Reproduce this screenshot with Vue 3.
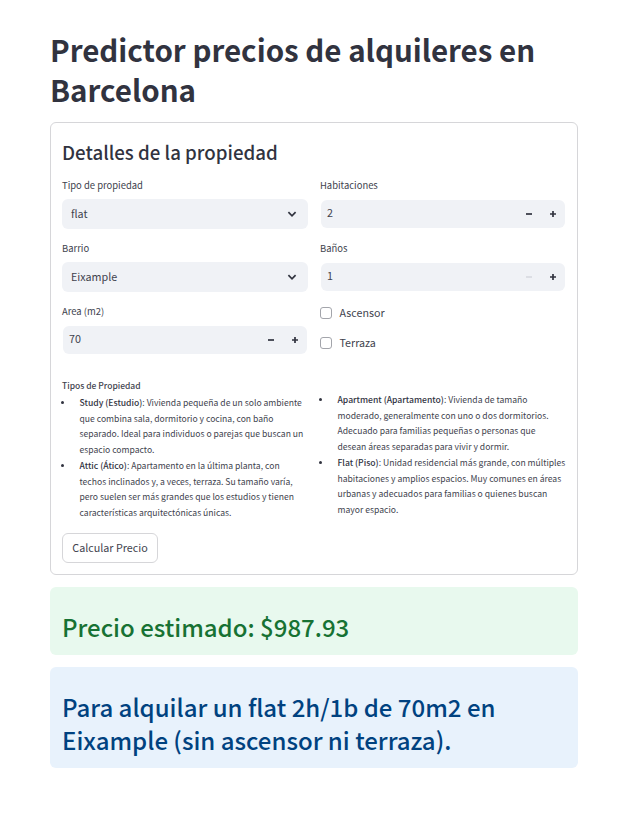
<script setup>
import { ref, computed } from 'vue'

const form = ref({ tipo: 'flat', barrio: 'Eixample', area: 70, habitaciones: 2, banos: 1, ascensor: false, terraza: false })

const left = [
  { kind: 'select', key: 'tipo', label: 'Tipo de propiedad' },
  { kind: 'select', key: 'barrio', label: 'Barrio' },
  { kind: 'number', key: 'area', label: 'Area (m2)', min: 10 },
]
const right = [
  { kind: 'number', key: 'habitaciones', label: 'Habitaciones', min: 1 },
  { kind: 'number', key: 'banos', label: 'Baños', min: 1 },
]
const columns = [left, right]
const checks = [
  { key: 'ascensor', label: 'Ascensor' },
  { key: 'terraza', label: 'Terraza' },
]
const types = [
  [
    { name: 'Study (Estudio)', lines: [': Vivienda pequeña de un solo ambiente', 'que combina sala, dormitorio y cocina, con baño', 'separado. Ideal para individuos o parejas que buscan un', 'espacio compacto.'] },
    { name: 'Attic (Ático)', lines: [': Apartamento en la última planta, con', 'techos inclinados y, a veces, terraza. Su tamaño varía,', 'pero suelen ser más grandes que los estudios y tienen', 'características arquitectónicas únicas.'] },
  ],
  [
    { name: 'Apartment (Apartamento)', lines: [': Vivienda de tamaño', 'moderado, generalmente con uno o dos dormitorios.', 'Adecuado para familias pequeñas o personas que', 'desean áreas separadas para vivir y dormir.'] },
    { name: 'Flat (Piso)', lines: [': Unidad residencial más grande, con múltiples', 'habitaciones y amplios espacios. Muy comunes en áreas', 'urbanas y adecuados para familias o quienes buscan', 'mayor espacio.'] },
  ],
]
const summary = computed(() => [
  `Para alquilar un ${form.value.tipo} ${form.value.habitaciones}h/${form.value.banos}b de ${form.value.area}m2 en`,
  `${form.value.barrio} (sin ascensor ni terraza).`,
])
function step(f, d) {
  form.value[f.key] = Math.max(f.min, form.value[f.key] + d)
}
</script>

<template>
  <main class="page">
    <h1>Predictor precios de alquileres en<br>Barcelona</h1>
    <section class="card">
      <h3>Detalles de la propiedad</h3>
      <div class="grid">
        <div v-for="(col, i) in columns" :key="i" class="col">
          <div v-for="f in col" :key="f.key" class="field">
            <div class="label">{{ f.label }}</div>
            <div v-if="f.kind === 'select'" class="select">
              <span>{{ form[f.key] }}</span>
              <svg width="12" height="12" viewBox="0 0 12 12"><path d="M2.4 4.2 6 7.8l3.6-3.6" /></svg>
            </div>
            <div v-else class="number">
              <span>{{ form[f.key] }}</span>
              <button :disabled="form[f.key] <= f.min" aria-label="−" @click="step(f, -1)">
                <svg width="8" height="8" viewBox="0 0 8 8"><path d="M1 4h6" /></svg>
              </button>
              <button aria-label="+" @click="step(f, 1)">
                <svg width="8" height="8" viewBox="0 0 8 8"><path d="M1 4h6M4 1v6" /></svg>
              </button>
            </div>
          </div>
          <template v-if="i === 1">
            <label v-for="c in checks" :key="c.key" class="check" @click="form[c.key] = !form[c.key]">
              <span class="box"></span><span class="checktext">{{ c.label }}</span>
            </label>
          </template>
        </div>
      </div>
      <div class="grid types">
        <div v-for="(items, i) in types" :key="i" class="typecol">
          <div v-if="i === 0" class="caption">Tipos de Propiedad</div>
          <ul>
            <li v-for="t in items" :key="t.name">
              <i class="dot"></i>
              <div>
                <div v-for="(l, n) in t.lines" :key="n" class="line"><b v-if="n === 0">{{ t.name }}</b>{{ l }}</div>
              </div>
            </li>
          </ul>
        </div>
      </div>
      <button class="submit">Calcular Precio</button>
    </section>
    <div class="alert success">Precio estimado: $987.93</div>
    <div class="alert info"><div v-for="s in summary" :key="s">{{ s }}</div></div>
  </main>
</template>

<style>
body { background: #fff; }
</style>

<style scoped>
.page { box-sizing: border-box; width: 628px; padding: 30px 50px 0; font-family: "Noto Sans CJK SC", "Noto Sans", sans-serif; color: #31333f; white-space: nowrap; }
h1 { margin: 0; height: 92px; font-size: 29.53px; line-height: 40px; font-weight: 700; }
.card { box-sizing: border-box; height: 453px; border: 1px solid #d6d6d9; border-radius: 6px; padding: 12px 11px 11px; }
h3 { margin: 0; height: 43px; line-height: 34px; font-size: 18.7px; font-weight: 500; }
.grid { display: grid; grid-template-columns: 246px 246px; column-gap: 12px; }
.col { height: 177px; display: flex; flex-direction: column; gap: 12px; }
.field { height: 51px; }
.label { height: 21px; line-height: 14px; font-size: 9.45px; color: #41434e; }
.select, .number { display: flex; align-items: center; background: #f0f2f6; border-radius: 6px; font-size: 10.75px; }
.select { height: 30px; padding: 0 10px 0 9px; }
.select span, .number span { flex: 1; color: #41434e; }
.select span { line-height: 28px; }
svg { display: block; fill: none; stroke: currentColor; stroke-width: 1.7; }
.number { height: 28px; margin: 1px; padding-left: 6px; }
.number span { line-height: 26px; padding-bottom: 2px; }
button { font: inherit; color: inherit; border: 0; background: none; padding: 0; }
.number button { width: 24px; height: 28px; display: grid; place-items: center; }
.number button:disabled { color: #d9dbe1; }
.check { display: flex; align-items: center; gap: 7.5px; height: 18px; font-size: 10.7px; color: #41434e; }
.checktext { line-height: 18px; }
.box { box-sizing: border-box; width: 12px; height: 12px; border: 1px solid #a3a5ab; border-radius: 3px; }
.types { height: 178px; padding-top: 23px; box-sizing: border-box; font-size: 8.6px; color: #41434e; }
.typecol:nth-child(2) { padding-top: 14px; }
.caption { height: 17px; line-height: 15px; font-weight: 500; font-size: 8.5px; }
ul { margin: 0; padding: 0; list-style: none; }
li { display: flex; gap: 15.5px; margin-bottom: 1px; }
.dot { width: 3px; height: 3px; margin-top: 6px; margin-left: -1px; border-radius: 50%; background: #31333f; }
.line { line-height: 15.5px; }
b { font-weight: 500; color: #31333f; }
.submit { box-sizing: border-box; width: 96px; height: 30px; border: 1px solid #d6d6d9; border-radius: 6px; font-size: 10.75px; line-height: 28px; color: #41434e; }
.alert { box-sizing: border-box; margin-top: 12px; border-radius: 6px; padding: 23px 12px 0; font-size: 24px; line-height: 33px; font-weight: 500; }
.success { height: 68px; background: #e8f9ee; color: #177233; }
.info { height: 101px; background: #e8f2fc; color: #004280; }
</style>
